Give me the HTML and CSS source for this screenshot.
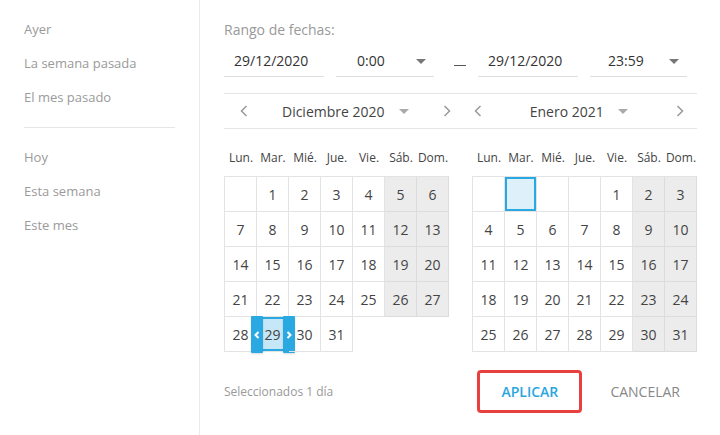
FILE: index.html
```html
<!DOCTYPE html>
<html lang="es">
<head>
    <meta charset="UTF-8">
    <meta name="viewport" content="width=device-width, initial-scale=1.0">
    <title>Rango de fechas</title>
    <link rel="stylesheet" href="styles.css">
</head>
<body>
    <div class="picker">
        <!-- Shortcuts -->
        <aside class="shortcuts">
            <div class="shortcut">Ayer</div>
            <div class="shortcut">La semana pasada</div>
            <div class="shortcut">El mes pasado</div>
            <div class="divider"></div>
            <div class="shortcut">Hoy</div>
            <div class="shortcut">Esta semana</div>
            <div class="shortcut">Este mes</div>
        </aside>

        <!-- Range -->
        <main class="range">
            <div class="range-label">Rango de fechas:</div>
            <div class="range-inputs">
                <div class="field date">29/12/2020</div>
                <div class="field time">0:00<span class="caret"></span></div>
                <span class="dash"></span>
                <div class="field date">29/12/2020</div>
                <div class="field time late">23:59<span class="caret"></span></div>
            </div>

            <div class="months-nav">
                <div class="month-nav">
                    <svg class="chev" width="8" height="12" viewBox="0 0 8 12"><polyline points="6.5,1 1.5,6 6.5,11"/></svg>
                    <div class="month-title">Diciembre 2020<span class="caret small"></span></div>
                    <svg class="chev" width="8" height="12" viewBox="0 0 8 12"><polyline points="1.5,1 6.5,6 1.5,11"/></svg>
                </div>
                <div class="month-nav">
                    <svg class="chev" width="8" height="12" viewBox="0 0 8 12"><polyline points="6.5,1 1.5,6 6.5,11"/></svg>
                    <div class="month-title">Enero 2021<span class="caret small"></span></div>
                    <svg class="chev" width="8" height="12" viewBox="0 0 8 12"><polyline points="1.5,1 6.5,6 1.5,11"/></svg>
                </div>
            </div>

            <div class="months">
                <div class="month">
                    <div class="weekdays">
                        <span>Lun.</span><span>Mar.</span><span>Mié.</span><span>Jue.</span><span>Vie.</span><span>Sáb.</span><span>Dom.</span>
                    </div>
                    <div class="days">
                        <div class="cell"></div><div class="cell">1</div><div class="cell">2</div><div class="cell">3</div><div class="cell">4</div><div class="cell">5</div><div class="cell">6</div>
                        <div class="cell">7</div><div class="cell">8</div><div class="cell">9</div><div class="cell">10</div><div class="cell">11</div><div class="cell">12</div><div class="cell">13</div>
                        <div class="cell">14</div><div class="cell">15</div><div class="cell">16</div><div class="cell">17</div><div class="cell">18</div><div class="cell">19</div><div class="cell">20</div>
                        <div class="cell">21</div><div class="cell">22</div><div class="cell">23</div><div class="cell">24</div><div class="cell">25</div><div class="cell">26</div><div class="cell">27</div>
                        <div class="cell">28</div>
                        <div class="cell selected">
                            <span class="handle left"><svg width="6" height="8" viewBox="0 0 6 8"><polyline points="4.5,1 1.5,4 4.5,7"/></svg></span>
                            29
                            <span class="handle right"><svg width="6" height="8" viewBox="0 0 6 8"><polyline points="1.5,1 4.5,4 1.5,7"/></svg></span>
                        </div>
                        <div class="cell">30</div><div class="cell">31</div>
                    </div>
                </div>

                <div class="month">
                    <div class="weekdays">
                        <span>Lun.</span><span>Mar.</span><span>Mié.</span><span>Jue.</span><span>Vie.</span><span>Sáb.</span><span>Dom.</span>
                    </div>
                    <div class="days">
                        <div class="cell"></div><div class="cell hover"></div><div class="cell"></div><div class="cell"></div><div class="cell">1</div><div class="cell">2</div><div class="cell">3</div>
                        <div class="cell">4</div><div class="cell">5</div><div class="cell">6</div><div class="cell">7</div><div class="cell">8</div><div class="cell">9</div><div class="cell">10</div>
                        <div class="cell">11</div><div class="cell">12</div><div class="cell">13</div><div class="cell">14</div><div class="cell">15</div><div class="cell">16</div><div class="cell">17</div>
                        <div class="cell">18</div><div class="cell">19</div><div class="cell">20</div><div class="cell">21</div><div class="cell">22</div><div class="cell">23</div><div class="cell">24</div>
                        <div class="cell">25</div><div class="cell">26</div><div class="cell">27</div><div class="cell">28</div><div class="cell">29</div><div class="cell">30</div><div class="cell">31</div>
                    </div>
                </div>
            </div>

            <div class="footer">
                <span class="summary">Seleccionados 1 día</span>
                <button class="btn btn-apply">APLICAR</button>
                <button class="btn btn-cancel">CANCELAR</button>
            </div>
        </main>
    </div>
</body>
</html>
```

FILE: styles.css
```css
/* General Styles */
body {
    font-family: 'Open Sans', 'Noto Sans', sans-serif;
    color: #333;
    background-color: #fff;
    margin: 0;
    padding: 0;
}
.picker {
    display: flex;
    width: 720px;
    height: 435px;
}

/* Shortcuts */
.shortcuts {
    width: 151px;
    padding: 12px 24px 0;
    border-right: 1px solid #ebebeb;
}
.shortcut {
    font-size: 13px;
    line-height: 34px;
    color: #9a9a9a;
}
.divider {
    height: 1px;
    background: #e6e6e6;
    margin: 13px 0 12px;
}

/* Range */
.range {
    width: 473px;
    padding: 20px 23px 0 24px;
}
.range-label {
    font-size: 14px;
    line-height: 20px;
    color: #999;
}
.range-inputs {
    display: flex;
    align-items: center;
    gap: 12px;
    margin-top: 6px;
}
.field {
    height: 30px;
    line-height: 30px;
    font-size: 14px;
    color: #333;
    border-bottom: 1px solid #dedede;
    box-sizing: content-box;
}
.field.date {
    width: 90px;
    padding-left: 10px;
}
.field.time {
    width: 69px;
    padding: 0 8px 0 21px;
    display: flex;
    align-items: center;
    justify-content: space-between;
}
.field.time.late {
    width: 71px;
    padding-left: 18px;
}
.dash {
    width: 12px;
    height: 1px;
    background: #555;
    margin: 8px 0 0 8px;
}
.caret {
    width: 0;
    height: 0;
    border-left: 5px solid transparent;
    border-right: 5px solid transparent;
    border-top: 5px solid #777;
}
.caret.small {
    border-top: 5px solid #aaa;
    margin-left: 14px;
}

/* Month navigation */
.months-nav {
    display: flex;
    margin-top: 16px;
    border-top: 1px solid #e6e6e6;
    border-bottom: 1px solid #e6e6e6;
    height: 34px;
}
.month-nav {
    flex: 1;
    display: flex;
    align-items: center;
    justify-content: space-between;
    padding: 0 13px 0 14px;
}
.month-nav:first-child {
    padding-left: 16px;
}
.month-nav:last-child {
    padding-left: 10px;
}
.chev polyline {
    fill: none;
    stroke: #999;
    stroke-width: 1.5;
}
.month-title {
    display: flex;
    align-items: center;
    font-size: 14px;
    color: #444;
}

/* Calendars */
.months {
    display: flex;
    gap: 23px;
}
.month {
    width: 225px;
}
.weekdays {
    display: grid;
    grid-template-columns: repeat(7, 1fr);
    padding: 20px 0 9px 1px;
    font-size: 12px;
    line-height: 18px;
    color: #444;
    text-align: center;
}
.days {
    display: grid;
    grid-template-columns: repeat(7, 1fr);
    grid-auto-rows: 35px;
    border-top: 1px solid #e3e3e3;
    border-left: 1px solid #e3e3e3;
}
.days .cell {
    position: relative;
    display: flex;
    align-items: center;
    justify-content: center;
    border-right: 1px solid #e3e3e3;
    border-bottom: 1px solid #e3e3e3;
    font-size: 14px;
    color: #444;
}
.days .cell:nth-child(7n+6),
.days .cell:nth-child(7n) {
    background: #ececec;
    border-color: #dcdcdc;
}
.days .cell.hover {
    background: #def1fb;
    box-shadow: 0 0 0 2px #2aa8e2 inset;
}
.days .cell.selected {
    background: #c5e7f7;
    box-shadow: 0 2px 0 #2aa8e2 inset, 0 -2px 0 #2aa8e2 inset;
}
.handle {
    position: absolute;
    top: -1px;
    bottom: -2px;
    width: 12px;
    background: #2aa8e2;
    display: flex;
    align-items: center;
    justify-content: center;
    border-radius: 1px;
    box-shadow: 0 1px 2px rgba(0, 0, 0, 0.15);
}
.handle polyline {
    fill: none;
    stroke: #fff;
    stroke-width: 2;
}
.handle.left {
    left: -6px;
}
.handle.right {
    right: -7px;
}

/* Footer */
.footer {
    display: flex;
    align-items: center;
    margin-top: 18px;
}
.summary {
    flex: 1;
    font-size: 12px;
    color: #999;
}
.btn {
    font-family: inherit;
    font-size: 14px;
    background: none;
    border: none;
    padding: 0;
    cursor: pointer;
}
.btn-apply {
    width: 105px;
    height: 43px;
    border: 3px solid #e8403e;
    border-radius: 4px;
    color: #2aa6df;
    font-weight: 600;
}
.btn-cancel {
    margin: 0 17px 0 28px;
    color: #888;
}
```
